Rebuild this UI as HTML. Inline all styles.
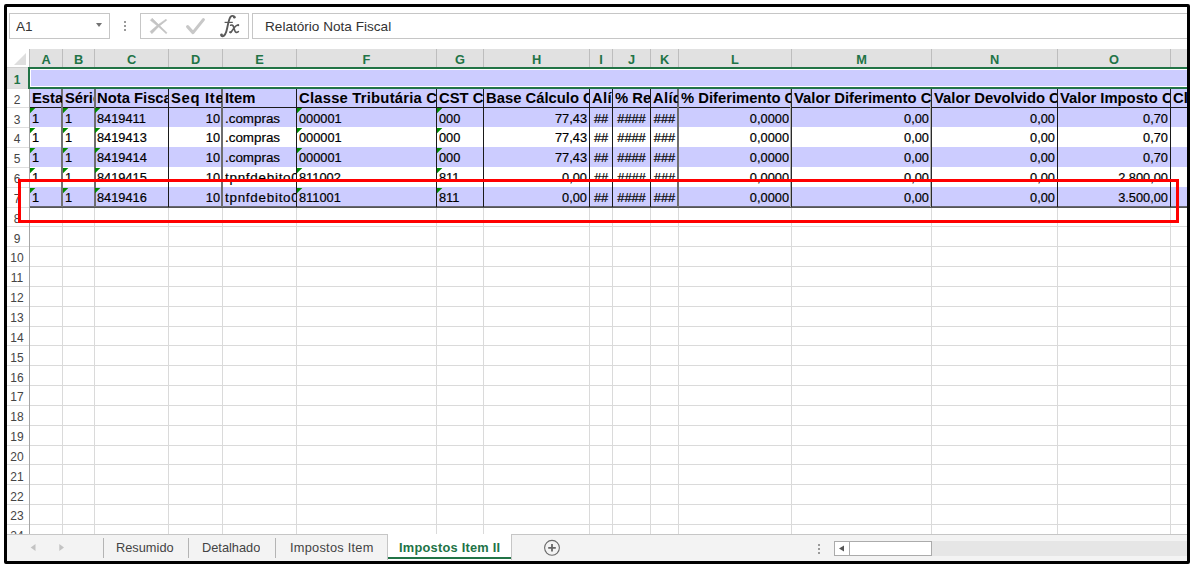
<!DOCTYPE html><html><head><meta charset="utf-8"><style>
*{margin:0;padding:0;box-sizing:border-box}
html,body{width:1193px;height:570px;overflow:hidden;background:#fff;font-family:"Liberation Sans",sans-serif}
.a{position:absolute}
.t{position:absolute;white-space:nowrap;overflow:hidden}
.d{-webkit-text-stroke:0.2px #000}
</style></head><body>
<div class="a" style="left:7px;top:7px;width:1180px;height:554px;overflow:hidden">
<div class="a" style="left:-7px;top:-7px;width:1193px;height:570px">

<div class="a" style="left:9px;top:13px;width:101px;height:26px;border:1px solid #c6c6c6;background:#fff"></div>
<div class="t" style="left:16px;top:19px;height:15px;line-height:15px;font-size:13.6px;font-weight:normal;color:#333;text-align:left;">A1</div>
<div class="a" style="left:96px;top:23px;width:0;height:0;border-left:3.5px solid transparent;border-right:3.5px solid transparent;border-top:4px solid #737373"></div>
<div class="a" style="left:124px;top:21px;width:2px;height:2px;background:#9a9a9a"></div>
<div class="a" style="left:124px;top:25px;width:2px;height:2px;background:#9a9a9a"></div>
<div class="a" style="left:124px;top:29px;width:2px;height:2px;background:#9a9a9a"></div>
<div class="a" style="left:140px;top:13px;width:109px;height:26px;border:1px solid #c6c6c6;background:#fff"></div>
<svg class="a" style="left:145px;top:14px" width="28" height="24" viewBox="145 14 28 24">
<path d="M150.36 20.34 Q158.5 26.5 166.2 33.64 L167.0 32.76 Q159.5 25.5 152.24 18.26 Z" fill="#c4c4c4" stroke="#c4c4c4" stroke-width="0.6" stroke-linejoin="round"/>
<path d="M166.015 19.24 Q157.5 24.5 150.1 31.53 L151.9 33.67 Q158.5 25.8 166.785 20.16 Z" fill="#c4c4c4" stroke="#c4c4c4" stroke-width="0.6" stroke-linejoin="round"/>
</svg>
<svg class="a" style="left:180px;top:14px" width="30" height="24" viewBox="180 14 30 24">
<path d="M187.6 26.6 L193 32.6 L203.4 19.6" stroke="#c8c8c8" stroke-width="3.1" fill="none" stroke-linecap="round" stroke-linejoin="round"/>
</svg>
<svg class="a" style="left:212px;top:12px" width="40" height="28" viewBox="212 12 40 28">
<path d="M234.6 17.2 C234 15.6 231.8 15.3 230.5 16.9 C229.1 18.7 228.2 23 227.2 28 C226.2 33 225.2 35.8 222.8 36.2 C221.8 36.3 221 35.8 221.3 34.9" stroke="#5a5a5a" stroke-width="1.9" fill="none" stroke-linecap="round"/>
<circle cx="234.3" cy="17.3" r="1.3" fill="#5a5a5a"/><circle cx="221.6" cy="34.7" r="1.3" fill="#5a5a5a"/>
<path d="M224.6 22.4 H232.8" stroke="#5a5a5a" stroke-width="1.2"/>
<path d="M230.6 25.2 C232.2 24.6 233.1 25.2 233.6 27 L234.9 31 C235.4 32.6 236.6 32.9 238.4 31.6 M238.4 25 C236.8 24.8 235.4 26 233.5 28.6 L231.4 31.8 C230.9 32.6 230.3 32.7 230 32.2" stroke="#5a5a5a" stroke-width="1.6" fill="none" stroke-linecap="round"/>
<circle cx="238.2" cy="25.3" r="1" fill="#5a5a5a"/><circle cx="230.3" cy="32.2" r="1" fill="#5a5a5a"/>
</svg>
<div class="a" style="left:252px;top:13px;width:1000px;height:26px;border:1px solid #c6c6c6;background:#fff"></div>
<div class="t" style="left:265px;top:19px;height:15px;line-height:15px;font-size:13.6px;font-weight:normal;color:#333;text-align:left;letter-spacing:0px;">Relatório Nota Fiscal</div>
<div class="a" style="left:29px;top:49px;width:1160px;height:18px;background:#e1e1e1"></div>
<svg class="a" style="left:7px;top:49px" width="22" height="18"><path d="M7 16 L19 4 L19 16 Z" fill="#dedede"/></svg>
<div class="a" style="left:7px;top:67px;width:22px;height:1px;background:#cfcfcf"></div>
<div class="a" style="left:29px;top:49px;width:1px;height:18px;background:#bdbdbd"></div>
<div class="t" style="left:25.5px;top:52px;width:41px;height:15px;line-height:15px;font-size:12.8px;font-weight:bold;color:#217346;text-align:center;">A</div>
<div class="a" style="left:62px;top:49px;width:1px;height:18px;background:#bdbdbd"></div>
<div class="t" style="left:58.0px;top:52px;width:41px;height:15px;line-height:15px;font-size:12.8px;font-weight:bold;color:#217346;text-align:center;">B</div>
<div class="a" style="left:94px;top:49px;width:1px;height:18px;background:#bdbdbd"></div>
<div class="t" style="left:111.0px;top:52px;width:41px;height:15px;line-height:15px;font-size:12.8px;font-weight:bold;color:#217346;text-align:center;">C</div>
<div class="a" style="left:168px;top:49px;width:1px;height:18px;background:#bdbdbd"></div>
<div class="t" style="left:175.0px;top:52px;width:41px;height:15px;line-height:15px;font-size:12.8px;font-weight:bold;color:#217346;text-align:center;">D</div>
<div class="a" style="left:222px;top:49px;width:1px;height:18px;background:#bdbdbd"></div>
<div class="t" style="left:239.0px;top:52px;width:41px;height:15px;line-height:15px;font-size:12.8px;font-weight:bold;color:#217346;text-align:center;">E</div>
<div class="a" style="left:296px;top:49px;width:1px;height:18px;background:#bdbdbd"></div>
<div class="t" style="left:346.0px;top:52px;width:41px;height:15px;line-height:15px;font-size:12.8px;font-weight:bold;color:#217346;text-align:center;">F</div>
<div class="a" style="left:436px;top:49px;width:1px;height:18px;background:#bdbdbd"></div>
<div class="t" style="left:439.5px;top:52px;width:41px;height:15px;line-height:15px;font-size:12.8px;font-weight:bold;color:#217346;text-align:center;">G</div>
<div class="a" style="left:483px;top:49px;width:1px;height:18px;background:#bdbdbd"></div>
<div class="t" style="left:516.0px;top:52px;width:41px;height:15px;line-height:15px;font-size:12.8px;font-weight:bold;color:#217346;text-align:center;">H</div>
<div class="a" style="left:589px;top:49px;width:1px;height:18px;background:#bdbdbd"></div>
<div class="t" style="left:580.5px;top:52px;width:41px;height:15px;line-height:15px;font-size:12.8px;font-weight:bold;color:#217346;text-align:center;">I</div>
<div class="a" style="left:612px;top:49px;width:1px;height:18px;background:#bdbdbd"></div>
<div class="t" style="left:611.0px;top:52px;width:41px;height:15px;line-height:15px;font-size:12.8px;font-weight:bold;color:#217346;text-align:center;">J</div>
<div class="a" style="left:650px;top:49px;width:1px;height:18px;background:#bdbdbd"></div>
<div class="t" style="left:644.0px;top:52px;width:41px;height:15px;line-height:15px;font-size:12.8px;font-weight:bold;color:#217346;text-align:center;">K</div>
<div class="a" style="left:678px;top:49px;width:1px;height:18px;background:#bdbdbd"></div>
<div class="t" style="left:714.5px;top:52px;width:41px;height:15px;line-height:15px;font-size:12.8px;font-weight:bold;color:#217346;text-align:center;">L</div>
<div class="a" style="left:791px;top:49px;width:1px;height:18px;background:#bdbdbd"></div>
<div class="t" style="left:841.0px;top:52px;width:41px;height:15px;line-height:15px;font-size:12.8px;font-weight:bold;color:#217346;text-align:center;">M</div>
<div class="a" style="left:931px;top:49px;width:1px;height:18px;background:#bdbdbd"></div>
<div class="t" style="left:974.0px;top:52px;width:41px;height:15px;line-height:15px;font-size:12.8px;font-weight:bold;color:#217346;text-align:center;">N</div>
<div class="a" style="left:1057px;top:49px;width:1px;height:18px;background:#bdbdbd"></div>
<div class="t" style="left:1093.5px;top:52px;width:41px;height:15px;line-height:15px;font-size:12.8px;font-weight:bold;color:#217346;text-align:center;">O</div>
<div class="a" style="left:1170px;top:49px;width:1px;height:18px;background:#bdbdbd"></div>
<div class="t" style="left:1215.0px;top:52px;width:41px;height:15px;line-height:15px;font-size:12.8px;font-weight:bold;color:#217346;text-align:center;">P</div>
<div class="a" style="left:7px;top:68px;width:22px;height:20px;background:#e1e1e1"></div>
<div class="a" style="left:7px;top:88px;width:22px;height:1px;background:#dedede"></div>
<div class="t" style="left:6px;top:73px;width:22px;height:14px;line-height:14px;font-size:12px;font-weight:bold;color:#217346;text-align:center;">1</div>
<div class="a" style="left:7px;top:107px;width:22px;height:1px;background:#dedede"></div>
<div class="t" style="left:6px;top:93px;width:22px;height:14px;line-height:14px;font-size:12px;font-weight:normal;color:#444;text-align:center;">2</div>
<div class="a" style="left:7px;top:127px;width:22px;height:1px;background:#dedede"></div>
<div class="t" style="left:6px;top:113px;width:22px;height:14px;line-height:14px;font-size:12px;font-weight:normal;color:#444;text-align:center;">3</div>
<div class="a" style="left:7px;top:147px;width:22px;height:1px;background:#dedede"></div>
<div class="t" style="left:6px;top:132px;width:22px;height:14px;line-height:14px;font-size:12px;font-weight:normal;color:#444;text-align:center;">4</div>
<div class="a" style="left:7px;top:167px;width:22px;height:1px;background:#dedede"></div>
<div class="t" style="left:6px;top:152px;width:22px;height:14px;line-height:14px;font-size:12px;font-weight:normal;color:#444;text-align:center;">5</div>
<div class="a" style="left:7px;top:187px;width:22px;height:1px;background:#dedede"></div>
<div class="t" style="left:6px;top:172px;width:22px;height:14px;line-height:14px;font-size:12px;font-weight:normal;color:#444;text-align:center;">6</div>
<div class="a" style="left:7px;top:207px;width:22px;height:1px;background:#dedede"></div>
<div class="t" style="left:6px;top:192px;width:22px;height:14px;line-height:14px;font-size:12px;font-weight:normal;color:#444;text-align:center;">7</div>
<div class="a" style="left:7px;top:226px;width:22px;height:1px;background:#dedede"></div>
<div class="t" style="left:6px;top:212px;width:22px;height:14px;line-height:14px;font-size:12px;font-weight:normal;color:#444;text-align:center;">8</div>
<div class="a" style="left:7px;top:246px;width:22px;height:1px;background:#dedede"></div>
<div class="t" style="left:6px;top:232px;width:22px;height:14px;line-height:14px;font-size:12px;font-weight:normal;color:#444;text-align:center;">9</div>
<div class="a" style="left:7px;top:266px;width:22px;height:1px;background:#dedede"></div>
<div class="t" style="left:6px;top:251px;width:22px;height:14px;line-height:14px;font-size:12px;font-weight:normal;color:#444;text-align:center;">10</div>
<div class="a" style="left:7px;top:286px;width:22px;height:1px;background:#dedede"></div>
<div class="t" style="left:6px;top:271px;width:22px;height:14px;line-height:14px;font-size:12px;font-weight:normal;color:#444;text-align:center;">11</div>
<div class="a" style="left:7px;top:306px;width:22px;height:1px;background:#dedede"></div>
<div class="t" style="left:6px;top:291px;width:22px;height:14px;line-height:14px;font-size:12px;font-weight:normal;color:#444;text-align:center;">12</div>
<div class="a" style="left:7px;top:326px;width:22px;height:1px;background:#dedede"></div>
<div class="t" style="left:6px;top:311px;width:22px;height:14px;line-height:14px;font-size:12px;font-weight:normal;color:#444;text-align:center;">13</div>
<div class="a" style="left:7px;top:345px;width:22px;height:1px;background:#dedede"></div>
<div class="t" style="left:6px;top:331px;width:22px;height:14px;line-height:14px;font-size:12px;font-weight:normal;color:#444;text-align:center;">14</div>
<div class="a" style="left:7px;top:365px;width:22px;height:1px;background:#dedede"></div>
<div class="t" style="left:6px;top:351px;width:22px;height:14px;line-height:14px;font-size:12px;font-weight:normal;color:#444;text-align:center;">15</div>
<div class="a" style="left:7px;top:385px;width:22px;height:1px;background:#dedede"></div>
<div class="t" style="left:6px;top:371px;width:22px;height:14px;line-height:14px;font-size:12px;font-weight:normal;color:#444;text-align:center;">16</div>
<div class="a" style="left:7px;top:405px;width:22px;height:1px;background:#dedede"></div>
<div class="t" style="left:6px;top:390px;width:22px;height:14px;line-height:14px;font-size:12px;font-weight:normal;color:#444;text-align:center;">17</div>
<div class="a" style="left:7px;top:425px;width:22px;height:1px;background:#dedede"></div>
<div class="t" style="left:6px;top:410px;width:22px;height:14px;line-height:14px;font-size:12px;font-weight:normal;color:#444;text-align:center;">18</div>
<div class="a" style="left:7px;top:445px;width:22px;height:1px;background:#dedede"></div>
<div class="t" style="left:6px;top:430px;width:22px;height:14px;line-height:14px;font-size:12px;font-weight:normal;color:#444;text-align:center;">19</div>
<div class="a" style="left:7px;top:464px;width:22px;height:1px;background:#dedede"></div>
<div class="t" style="left:6px;top:450px;width:22px;height:14px;line-height:14px;font-size:12px;font-weight:normal;color:#444;text-align:center;">20</div>
<div class="a" style="left:7px;top:484px;width:22px;height:1px;background:#dedede"></div>
<div class="t" style="left:6px;top:470px;width:22px;height:14px;line-height:14px;font-size:12px;font-weight:normal;color:#444;text-align:center;">21</div>
<div class="a" style="left:7px;top:504px;width:22px;height:1px;background:#dedede"></div>
<div class="t" style="left:6px;top:490px;width:22px;height:14px;line-height:14px;font-size:12px;font-weight:normal;color:#444;text-align:center;">22</div>
<div class="a" style="left:7px;top:524px;width:22px;height:1px;background:#dedede"></div>
<div class="t" style="left:6px;top:509px;width:22px;height:14px;line-height:14px;font-size:12px;font-weight:normal;color:#444;text-align:center;">23</div>
<div class="a" style="left:7px;top:544px;width:22px;height:1px;background:#dedede"></div>
<div class="t" style="left:6px;top:529px;width:22px;height:14px;line-height:14px;font-size:12px;font-weight:normal;color:#444;text-align:center;">24</div>
<div class="a" style="left:29px;top:67px;width:1px;height:470px;background:#a6a6a6"></div>
<div class="a" style="left:30px;top:207px;width:1160px;height:1px;background:#dadada"></div>
<div class="a" style="left:30px;top:226px;width:1160px;height:1px;background:#dadada"></div>
<div class="a" style="left:30px;top:246px;width:1160px;height:1px;background:#dadada"></div>
<div class="a" style="left:30px;top:266px;width:1160px;height:1px;background:#dadada"></div>
<div class="a" style="left:30px;top:286px;width:1160px;height:1px;background:#dadada"></div>
<div class="a" style="left:30px;top:306px;width:1160px;height:1px;background:#dadada"></div>
<div class="a" style="left:30px;top:326px;width:1160px;height:1px;background:#dadada"></div>
<div class="a" style="left:30px;top:345px;width:1160px;height:1px;background:#dadada"></div>
<div class="a" style="left:30px;top:365px;width:1160px;height:1px;background:#dadada"></div>
<div class="a" style="left:30px;top:385px;width:1160px;height:1px;background:#dadada"></div>
<div class="a" style="left:30px;top:405px;width:1160px;height:1px;background:#dadada"></div>
<div class="a" style="left:30px;top:425px;width:1160px;height:1px;background:#dadada"></div>
<div class="a" style="left:30px;top:445px;width:1160px;height:1px;background:#dadada"></div>
<div class="a" style="left:30px;top:464px;width:1160px;height:1px;background:#dadada"></div>
<div class="a" style="left:30px;top:484px;width:1160px;height:1px;background:#dadada"></div>
<div class="a" style="left:30px;top:504px;width:1160px;height:1px;background:#dadada"></div>
<div class="a" style="left:30px;top:524px;width:1160px;height:1px;background:#dadada"></div>
<div class="a" style="left:30px;top:544px;width:1160px;height:1px;background:#dadada"></div>
<div class="a" style="left:62px;top:207px;width:1px;height:340px;background:#dadada"></div>
<div class="a" style="left:94px;top:207px;width:1px;height:340px;background:#dadada"></div>
<div class="a" style="left:168px;top:207px;width:1px;height:340px;background:#dadada"></div>
<div class="a" style="left:222px;top:207px;width:1px;height:340px;background:#dadada"></div>
<div class="a" style="left:296px;top:207px;width:1px;height:340px;background:#dadada"></div>
<div class="a" style="left:436px;top:207px;width:1px;height:340px;background:#dadada"></div>
<div class="a" style="left:483px;top:207px;width:1px;height:340px;background:#dadada"></div>
<div class="a" style="left:589px;top:207px;width:1px;height:340px;background:#dadada"></div>
<div class="a" style="left:612px;top:207px;width:1px;height:340px;background:#dadada"></div>
<div class="a" style="left:650px;top:207px;width:1px;height:340px;background:#dadada"></div>
<div class="a" style="left:678px;top:207px;width:1px;height:340px;background:#dadada"></div>
<div class="a" style="left:791px;top:207px;width:1px;height:340px;background:#dadada"></div>
<div class="a" style="left:931px;top:207px;width:1px;height:340px;background:#dadada"></div>
<div class="a" style="left:1057px;top:207px;width:1px;height:340px;background:#dadada"></div>
<div class="a" style="left:1170px;top:207px;width:1px;height:340px;background:#dadada"></div>
<div class="a" style="left:28px;top:67px;width:1170px;height:22px;border:2px solid #217346;border-right:none;background:#fff"></div>
<div class="a" style="left:31px;top:70px;width:1160px;height:16px;background:#ccccff"></div>
<div class="a" style="left:30px;top:89px;width:1160px;height:18px;background:#ccccff"></div>
<div class="a" style="left:30px;top:107px;width:1160px;height:20px;background:#ccccff"></div>
<div class="a" style="left:30px;top:127px;width:1160px;height:20px;background:#fff"></div>
<div class="a" style="left:30px;top:147px;width:1160px;height:20px;background:#ccccff"></div>
<div class="a" style="left:30px;top:167px;width:1160px;height:20px;background:#fff"></div>
<div class="a" style="left:30px;top:187px;width:1160px;height:20px;background:#ccccff"></div>
<div class="a" style="left:30px;top:107px;width:1160px;height:1px;background:#1a1a1a"></div>
<div class="a" style="left:30px;top:206px;width:1160px;height:1px;background:#666670"></div>
<div class="a" style="left:30px;top:207px;width:1160px;height:1px;background:#555555"></div>
<div class="a" style="left:61px;top:89px;width:2px;height:118px;background:#727272"></div>
<div class="a" style="left:94px;top:89px;width:2px;height:118px;background:#6e6e6e"></div>
<div class="a" style="left:168px;top:89px;width:1px;height:118px;background:#1a1a1a"></div>
<div class="a" style="left:221px;top:89px;width:2px;height:118px;background:#6e6e6e"></div>
<div class="a" style="left:296px;top:89px;width:1px;height:118px;background:#1a1a1a"></div>
<div class="a" style="left:436px;top:89px;width:1px;height:118px;background:#1a1a1a"></div>
<div class="a" style="left:483px;top:89px;width:1px;height:118px;background:#1a1a1a"></div>
<div class="a" style="left:589px;top:89px;width:1px;height:118px;background:#1a1a1a"></div>
<div class="a" style="left:612px;top:89px;width:1px;height:118px;background:#1a1a1a"></div>
<div class="a" style="left:650px;top:89px;width:1px;height:118px;background:#1a1a1a"></div>
<div class="a" style="left:677px;top:89px;width:2px;height:118px;background:#6e6e6e"></div>
<div class="a" style="left:790px;top:89px;width:1px;height:118px;background:#b0b0b0"></div>
<div class="a" style="left:791px;top:89px;width:1px;height:118px;background:#2a2a2a"></div>
<div class="a" style="left:930px;top:89px;width:1px;height:118px;background:#b0b0b0"></div>
<div class="a" style="left:931px;top:89px;width:1px;height:118px;background:#2a2a2a"></div>
<div class="a" style="left:1057px;top:89px;width:1px;height:118px;background:#1a1a1a"></div>
<div class="a" style="left:1170px;top:89px;width:1px;height:118px;background:#1a1a1a"></div>
<div class="t" style="left:30px;top:89px;width:32px;height:18px">
<div class="t" style="left:2px;top:1px;line-height:17px;font-size:14.8px;font-weight:bold;color:#000;letter-spacing:0px">Estado</div></div>
<div class="t" style="left:63px;top:89px;width:31px;height:18px">
<div class="t" style="left:2px;top:1px;line-height:17px;font-size:14.8px;font-weight:bold;color:#000;letter-spacing:0px">Série</div></div>
<div class="t" style="left:95px;top:89px;width:73px;height:18px">
<div class="t" style="left:2px;top:1px;line-height:17px;font-size:14.8px;font-weight:bold;color:#000;letter-spacing:0px">Nota Fiscal</div></div>
<div class="t" style="left:169px;top:89px;width:53px;height:18px">
<div class="t" style="left:2px;top:1px;line-height:17px;font-size:14.8px;font-weight:bold;color:#000;letter-spacing:0.7px">Seq Item</div></div>
<div class="t" style="left:223px;top:89px;width:73px;height:18px">
<div class="t" style="left:2px;top:1px;line-height:17px;font-size:14.8px;font-weight:bold;color:#000;letter-spacing:0px">Item</div></div>
<div class="t" style="left:297px;top:89px;width:139px;height:18px">
<div class="t" style="left:2px;top:1px;line-height:17px;font-size:14.8px;font-weight:bold;color:#000;letter-spacing:0.22px">Classe Tributária COFINS</div></div>
<div class="t" style="left:437px;top:89px;width:46px;height:18px">
<div class="t" style="left:2px;top:1px;line-height:17px;font-size:14.8px;font-weight:bold;color:#000;letter-spacing:0px">CST COFINS</div></div>
<div class="t" style="left:484px;top:89px;width:105px;height:18px">
<div class="t" style="left:2px;top:1px;line-height:17px;font-size:14.8px;font-weight:bold;color:#000;letter-spacing:0px">Base Cálculo COFINS</div></div>
<div class="t" style="left:590px;top:89px;width:22px;height:18px">
<div class="t" style="left:2px;top:1px;line-height:17px;font-size:14.8px;font-weight:bold;color:#000;letter-spacing:0.3px">Alíquota</div></div>
<div class="t" style="left:613px;top:89px;width:37px;height:18px">
<div class="t" style="left:2px;top:1px;line-height:17px;font-size:14.8px;font-weight:bold;color:#000;letter-spacing:0px">% Redução</div></div>
<div class="t" style="left:651px;top:89px;width:27px;height:18px">
<div class="t" style="left:2px;top:1px;line-height:17px;font-size:14.8px;font-weight:bold;color:#000;letter-spacing:0.3px">Alíquota</div></div>
<div class="t" style="left:679px;top:89px;width:112px;height:18px">
<div class="t" style="left:2px;top:1px;line-height:17px;font-size:14.8px;font-weight:bold;color:#000;letter-spacing:0px">% Diferimento COFINS</div></div>
<div class="t" style="left:792px;top:89px;width:139px;height:18px">
<div class="t" style="left:2px;top:1px;line-height:17px;font-size:14.8px;font-weight:bold;color:#000;letter-spacing:0px">Valor Diferimento COFINS</div></div>
<div class="t" style="left:932px;top:89px;width:125px;height:18px">
<div class="t" style="left:2px;top:1px;line-height:17px;font-size:14.8px;font-weight:bold;color:#000;letter-spacing:0px">Valor Devolvido COFINS</div></div>
<div class="t" style="left:1058px;top:89px;width:112px;height:18px">
<div class="t" style="left:2px;top:1px;line-height:17px;font-size:14.8px;font-weight:bold;color:#000;letter-spacing:0px">Valor Imposto COFINS</div></div>
<div class="t" style="left:1171px;top:89px;width:129px;height:18px">
<div class="t" style="left:2px;top:1px;line-height:17px;font-size:14.8px;font-weight:bold;color:#000;letter-spacing:0px">Classe</div></div>
<svg class="a" style="left:30px;top:108px" width="6" height="6"><path d="M0 0 H5.3 L0 5.3 Z" fill="#008a00"/></svg>
<div class="t d" style="left:32px;top:111px;width:30px;height:15px;line-height:15px;font-size:12.8px;font-weight:normal;color:#000;text-align:left;">1</div>
<svg class="a" style="left:63px;top:108px" width="6" height="6"><path d="M0 0 H5.3 L0 5.3 Z" fill="#008a00"/></svg>
<div class="t d" style="left:65px;top:111px;width:29px;height:15px;line-height:15px;font-size:12.8px;font-weight:normal;color:#000;text-align:left;">1</div>
<svg class="a" style="left:95px;top:108px" width="6" height="6"><path d="M0 0 H5.3 L0 5.3 Z" fill="#008a00"/></svg>
<div class="t d" style="left:97px;top:111px;width:71px;height:15px;line-height:15px;font-size:12.8px;font-weight:normal;color:#000;text-align:left;">8419411</div>
<div class="t d" style="left:169px;top:111px;width:51px;height:15px;line-height:15px;font-size:12.8px;font-weight:normal;color:#000;text-align:right;">10</div>
<div class="t d" style="left:225px;top:111px;width:71px;height:15px;line-height:15px;font-size:13.4px;font-weight:normal;color:#000;text-align:left;">.compras</div>
<svg class="a" style="left:297px;top:108px" width="6" height="6"><path d="M0 0 H5.3 L0 5.3 Z" fill="#008a00"/></svg>
<div class="t d" style="left:299px;top:111px;width:137px;height:15px;line-height:15px;font-size:12.8px;font-weight:normal;color:#000;text-align:left;">000001</div>
<svg class="a" style="left:437px;top:108px" width="6" height="6"><path d="M0 0 H5.3 L0 5.3 Z" fill="#008a00"/></svg>
<div class="t d" style="left:439px;top:111px;width:44px;height:15px;line-height:15px;font-size:12.8px;font-weight:normal;color:#000;text-align:left;">000</div>
<div class="t d" style="left:484px;top:111px;width:103px;height:15px;line-height:15px;font-size:12.8px;font-weight:normal;color:#000;text-align:right;">77,43</div>
<div class="t d" style="left:590px;top:111px;width:22px;height:15px;line-height:15px;font-size:12.8px;font-weight:normal;color:#000;text-align:center;">##</div>
<div class="t d" style="left:613px;top:111px;width:37px;height:15px;line-height:15px;font-size:12.8px;font-weight:normal;color:#000;text-align:center;">####</div>
<div class="t d" style="left:651px;top:111px;width:27px;height:15px;line-height:15px;font-size:12.8px;font-weight:normal;color:#000;text-align:center;">###</div>
<div class="t d" style="left:679px;top:111px;width:110px;height:15px;line-height:15px;font-size:12.8px;font-weight:normal;color:#000;text-align:right;">0,0000</div>
<div class="t d" style="left:792px;top:111px;width:137px;height:15px;line-height:15px;font-size:12.8px;font-weight:normal;color:#000;text-align:right;">0,00</div>
<div class="t d" style="left:932px;top:111px;width:123px;height:15px;line-height:15px;font-size:12.8px;font-weight:normal;color:#000;text-align:right;">0,00</div>
<div class="t d" style="left:1058px;top:111px;width:110px;height:15px;line-height:15px;font-size:12.8px;font-weight:normal;color:#000;text-align:right;">0,70</div>
<svg class="a" style="left:30px;top:128px" width="6" height="6"><path d="M0 0 H5.3 L0 5.3 Z" fill="#008a00"/></svg>
<div class="t d" style="left:32px;top:130px;width:30px;height:15px;line-height:15px;font-size:12.8px;font-weight:normal;color:#000;text-align:left;">1</div>
<svg class="a" style="left:63px;top:128px" width="6" height="6"><path d="M0 0 H5.3 L0 5.3 Z" fill="#008a00"/></svg>
<div class="t d" style="left:65px;top:130px;width:29px;height:15px;line-height:15px;font-size:12.8px;font-weight:normal;color:#000;text-align:left;">1</div>
<svg class="a" style="left:95px;top:128px" width="6" height="6"><path d="M0 0 H5.3 L0 5.3 Z" fill="#008a00"/></svg>
<div class="t d" style="left:97px;top:130px;width:71px;height:15px;line-height:15px;font-size:12.8px;font-weight:normal;color:#000;text-align:left;">8419413</div>
<div class="t d" style="left:169px;top:130px;width:51px;height:15px;line-height:15px;font-size:12.8px;font-weight:normal;color:#000;text-align:right;">10</div>
<div class="t d" style="left:225px;top:130px;width:71px;height:15px;line-height:15px;font-size:13.4px;font-weight:normal;color:#000;text-align:left;">.compras</div>
<svg class="a" style="left:297px;top:128px" width="6" height="6"><path d="M0 0 H5.3 L0 5.3 Z" fill="#008a00"/></svg>
<div class="t d" style="left:299px;top:130px;width:137px;height:15px;line-height:15px;font-size:12.8px;font-weight:normal;color:#000;text-align:left;">000001</div>
<svg class="a" style="left:437px;top:128px" width="6" height="6"><path d="M0 0 H5.3 L0 5.3 Z" fill="#008a00"/></svg>
<div class="t d" style="left:439px;top:130px;width:44px;height:15px;line-height:15px;font-size:12.8px;font-weight:normal;color:#000;text-align:left;">000</div>
<div class="t d" style="left:484px;top:130px;width:103px;height:15px;line-height:15px;font-size:12.8px;font-weight:normal;color:#000;text-align:right;">77,43</div>
<div class="t d" style="left:590px;top:130px;width:22px;height:15px;line-height:15px;font-size:12.8px;font-weight:normal;color:#000;text-align:center;">##</div>
<div class="t d" style="left:613px;top:130px;width:37px;height:15px;line-height:15px;font-size:12.8px;font-weight:normal;color:#000;text-align:center;">####</div>
<div class="t d" style="left:651px;top:130px;width:27px;height:15px;line-height:15px;font-size:12.8px;font-weight:normal;color:#000;text-align:center;">###</div>
<div class="t d" style="left:679px;top:130px;width:110px;height:15px;line-height:15px;font-size:12.8px;font-weight:normal;color:#000;text-align:right;">0,0000</div>
<div class="t d" style="left:792px;top:130px;width:137px;height:15px;line-height:15px;font-size:12.8px;font-weight:normal;color:#000;text-align:right;">0,00</div>
<div class="t d" style="left:932px;top:130px;width:123px;height:15px;line-height:15px;font-size:12.8px;font-weight:normal;color:#000;text-align:right;">0,00</div>
<div class="t d" style="left:1058px;top:130px;width:110px;height:15px;line-height:15px;font-size:12.8px;font-weight:normal;color:#000;text-align:right;">0,70</div>
<svg class="a" style="left:30px;top:148px" width="6" height="6"><path d="M0 0 H5.3 L0 5.3 Z" fill="#008a00"/></svg>
<div class="t d" style="left:32px;top:150px;width:30px;height:15px;line-height:15px;font-size:12.8px;font-weight:normal;color:#000;text-align:left;">1</div>
<svg class="a" style="left:63px;top:148px" width="6" height="6"><path d="M0 0 H5.3 L0 5.3 Z" fill="#008a00"/></svg>
<div class="t d" style="left:65px;top:150px;width:29px;height:15px;line-height:15px;font-size:12.8px;font-weight:normal;color:#000;text-align:left;">1</div>
<svg class="a" style="left:95px;top:148px" width="6" height="6"><path d="M0 0 H5.3 L0 5.3 Z" fill="#008a00"/></svg>
<div class="t d" style="left:97px;top:150px;width:71px;height:15px;line-height:15px;font-size:12.8px;font-weight:normal;color:#000;text-align:left;">8419414</div>
<div class="t d" style="left:169px;top:150px;width:51px;height:15px;line-height:15px;font-size:12.8px;font-weight:normal;color:#000;text-align:right;">10</div>
<div class="t d" style="left:225px;top:150px;width:71px;height:15px;line-height:15px;font-size:13.4px;font-weight:normal;color:#000;text-align:left;">.compras</div>
<svg class="a" style="left:297px;top:148px" width="6" height="6"><path d="M0 0 H5.3 L0 5.3 Z" fill="#008a00"/></svg>
<div class="t d" style="left:299px;top:150px;width:137px;height:15px;line-height:15px;font-size:12.8px;font-weight:normal;color:#000;text-align:left;">000001</div>
<svg class="a" style="left:437px;top:148px" width="6" height="6"><path d="M0 0 H5.3 L0 5.3 Z" fill="#008a00"/></svg>
<div class="t d" style="left:439px;top:150px;width:44px;height:15px;line-height:15px;font-size:12.8px;font-weight:normal;color:#000;text-align:left;">000</div>
<div class="t d" style="left:484px;top:150px;width:103px;height:15px;line-height:15px;font-size:12.8px;font-weight:normal;color:#000;text-align:right;">77,43</div>
<div class="t d" style="left:590px;top:150px;width:22px;height:15px;line-height:15px;font-size:12.8px;font-weight:normal;color:#000;text-align:center;">##</div>
<div class="t d" style="left:613px;top:150px;width:37px;height:15px;line-height:15px;font-size:12.8px;font-weight:normal;color:#000;text-align:center;">####</div>
<div class="t d" style="left:651px;top:150px;width:27px;height:15px;line-height:15px;font-size:12.8px;font-weight:normal;color:#000;text-align:center;">###</div>
<div class="t d" style="left:679px;top:150px;width:110px;height:15px;line-height:15px;font-size:12.8px;font-weight:normal;color:#000;text-align:right;">0,0000</div>
<div class="t d" style="left:792px;top:150px;width:137px;height:15px;line-height:15px;font-size:12.8px;font-weight:normal;color:#000;text-align:right;">0,00</div>
<div class="t d" style="left:932px;top:150px;width:123px;height:15px;line-height:15px;font-size:12.8px;font-weight:normal;color:#000;text-align:right;">0,00</div>
<div class="t d" style="left:1058px;top:150px;width:110px;height:15px;line-height:15px;font-size:12.8px;font-weight:normal;color:#000;text-align:right;">0,70</div>
<svg class="a" style="left:30px;top:168px" width="6" height="6"><path d="M0 0 H5.3 L0 5.3 Z" fill="#008a00"/></svg>
<div class="t d" style="left:32px;top:170px;width:30px;height:15px;line-height:15px;font-size:12.8px;font-weight:normal;color:#000;text-align:left;">1</div>
<svg class="a" style="left:63px;top:168px" width="6" height="6"><path d="M0 0 H5.3 L0 5.3 Z" fill="#008a00"/></svg>
<div class="t d" style="left:65px;top:170px;width:29px;height:15px;line-height:15px;font-size:12.8px;font-weight:normal;color:#000;text-align:left;">1</div>
<svg class="a" style="left:95px;top:168px" width="6" height="6"><path d="M0 0 H5.3 L0 5.3 Z" fill="#008a00"/></svg>
<div class="t d" style="left:97px;top:170px;width:71px;height:15px;line-height:15px;font-size:12.8px;font-weight:normal;color:#000;text-align:left;">8419415</div>
<div class="t d" style="left:169px;top:170px;width:51px;height:15px;line-height:15px;font-size:12.8px;font-weight:normal;color:#000;text-align:right;">10</div>
<div class="t d" style="left:225px;top:170px;width:71px;height:15px;line-height:15px;font-size:13.4px;font-weight:normal;color:#000;text-align:left;letter-spacing:0.75px;">tpnfdebito0001</div>
<svg class="a" style="left:297px;top:168px" width="6" height="6"><path d="M0 0 H5.3 L0 5.3 Z" fill="#008a00"/></svg>
<div class="t d" style="left:299px;top:170px;width:137px;height:15px;line-height:15px;font-size:12.8px;font-weight:normal;color:#000;text-align:left;">811002</div>
<svg class="a" style="left:437px;top:168px" width="6" height="6"><path d="M0 0 H5.3 L0 5.3 Z" fill="#008a00"/></svg>
<div class="t d" style="left:439px;top:170px;width:44px;height:15px;line-height:15px;font-size:12.8px;font-weight:normal;color:#000;text-align:left;">811</div>
<div class="t d" style="left:484px;top:170px;width:103px;height:15px;line-height:15px;font-size:12.8px;font-weight:normal;color:#000;text-align:right;">0,00</div>
<div class="t d" style="left:590px;top:170px;width:22px;height:15px;line-height:15px;font-size:12.8px;font-weight:normal;color:#000;text-align:center;">##</div>
<div class="t d" style="left:613px;top:170px;width:37px;height:15px;line-height:15px;font-size:12.8px;font-weight:normal;color:#000;text-align:center;">####</div>
<div class="t d" style="left:651px;top:170px;width:27px;height:15px;line-height:15px;font-size:12.8px;font-weight:normal;color:#000;text-align:center;">###</div>
<div class="t d" style="left:679px;top:170px;width:110px;height:15px;line-height:15px;font-size:12.8px;font-weight:normal;color:#000;text-align:right;">0,0000</div>
<div class="t d" style="left:792px;top:170px;width:137px;height:15px;line-height:15px;font-size:12.8px;font-weight:normal;color:#000;text-align:right;">0,00</div>
<div class="t d" style="left:932px;top:170px;width:123px;height:15px;line-height:15px;font-size:12.8px;font-weight:normal;color:#000;text-align:right;">0,00</div>
<div class="t d" style="left:1058px;top:170px;width:110px;height:15px;line-height:15px;font-size:12.8px;font-weight:normal;color:#000;text-align:right;">2.800,00</div>
<svg class="a" style="left:30px;top:188px" width="6" height="6"><path d="M0 0 H5.3 L0 5.3 Z" fill="#008a00"/></svg>
<div class="t d" style="left:32px;top:190px;width:30px;height:15px;line-height:15px;font-size:12.8px;font-weight:normal;color:#000;text-align:left;">1</div>
<svg class="a" style="left:63px;top:188px" width="6" height="6"><path d="M0 0 H5.3 L0 5.3 Z" fill="#008a00"/></svg>
<div class="t d" style="left:65px;top:190px;width:29px;height:15px;line-height:15px;font-size:12.8px;font-weight:normal;color:#000;text-align:left;">1</div>
<svg class="a" style="left:95px;top:188px" width="6" height="6"><path d="M0 0 H5.3 L0 5.3 Z" fill="#008a00"/></svg>
<div class="t d" style="left:97px;top:190px;width:71px;height:15px;line-height:15px;font-size:12.8px;font-weight:normal;color:#000;text-align:left;">8419416</div>
<div class="t d" style="left:169px;top:190px;width:51px;height:15px;line-height:15px;font-size:12.8px;font-weight:normal;color:#000;text-align:right;">10</div>
<div class="t d" style="left:225px;top:190px;width:71px;height:15px;line-height:15px;font-size:13.4px;font-weight:normal;color:#000;text-align:left;letter-spacing:0.75px;">tpnfdebito0001</div>
<svg class="a" style="left:297px;top:188px" width="6" height="6"><path d="M0 0 H5.3 L0 5.3 Z" fill="#008a00"/></svg>
<div class="t d" style="left:299px;top:190px;width:137px;height:15px;line-height:15px;font-size:12.8px;font-weight:normal;color:#000;text-align:left;">811001</div>
<svg class="a" style="left:437px;top:188px" width="6" height="6"><path d="M0 0 H5.3 L0 5.3 Z" fill="#008a00"/></svg>
<div class="t d" style="left:439px;top:190px;width:44px;height:15px;line-height:15px;font-size:12.8px;font-weight:normal;color:#000;text-align:left;">811</div>
<div class="t d" style="left:484px;top:190px;width:103px;height:15px;line-height:15px;font-size:12.8px;font-weight:normal;color:#000;text-align:right;">0,00</div>
<div class="t d" style="left:590px;top:190px;width:22px;height:15px;line-height:15px;font-size:12.8px;font-weight:normal;color:#000;text-align:center;">##</div>
<div class="t d" style="left:613px;top:190px;width:37px;height:15px;line-height:15px;font-size:12.8px;font-weight:normal;color:#000;text-align:center;">####</div>
<div class="t d" style="left:651px;top:190px;width:27px;height:15px;line-height:15px;font-size:12.8px;font-weight:normal;color:#000;text-align:center;">###</div>
<div class="t d" style="left:679px;top:190px;width:110px;height:15px;line-height:15px;font-size:12.8px;font-weight:normal;color:#000;text-align:right;">0,0000</div>
<div class="t d" style="left:792px;top:190px;width:137px;height:15px;line-height:15px;font-size:12.8px;font-weight:normal;color:#000;text-align:right;">0,00</div>
<div class="t d" style="left:932px;top:190px;width:123px;height:15px;line-height:15px;font-size:12.8px;font-weight:normal;color:#000;text-align:right;">0,00</div>
<div class="t d" style="left:1058px;top:190px;width:110px;height:15px;line-height:15px;font-size:12.8px;font-weight:normal;color:#000;text-align:right;">3.500,00</div>
<div class="a" style="left:7px;top:534px;width:1185px;height:1px;background:#c6c6c6"></div>
<div class="a" style="left:7px;top:535px;width:1185px;height:26px;background:#f3f3f3"></div>
<svg class="a" style="left:28px;top:542px" width="40" height="12"><path d="M7.5 2 L2.7 5.5 L7.5 9 Z" fill="#c3c3c3"/><path d="M31.3 2 L36 5.5 L31.3 9 Z" fill="#c3c3c3"/></svg>
<div class="a" style="left:103px;top:538px;width:1px;height:20px;background:#b4b4b4"></div>
<div class="a" style="left:188px;top:538px;width:1px;height:20px;background:#b4b4b4"></div>
<div class="a" style="left:275px;top:538px;width:1px;height:20px;background:#b4b4b4"></div>
<div class="t" style="left:116px;top:540px;height:15px;line-height:15px;font-size:12.8px;font-weight:normal;color:#444;text-align:left;">Resumido</div>
<div class="t" style="left:202px;top:540px;height:15px;line-height:15px;font-size:12.8px;font-weight:normal;color:#444;text-align:left;">Detalhado</div>
<div class="t" style="left:290px;top:540px;height:15px;line-height:15px;font-size:12.8px;font-weight:normal;color:#444;text-align:left;letter-spacing:0.25px;">Impostos Item</div>
<div class="a" style="left:387px;top:534px;width:125px;height:26px;background:#fff;border-left:1px solid #c6c6c6;border-right:1px solid #c6c6c6"></div>
<div class="a" style="left:388px;top:557px;width:123px;height:2px;background:#217346"></div>
<div class="t" style="left:399px;top:540px;height:15px;line-height:15px;font-size:12.8px;font-weight:bold;color:#217346;text-align:left;letter-spacing:0.25px;">Impostos Item II</div>
<svg class="a" style="left:543px;top:539px" width="18" height="18"><circle cx="9" cy="8.8" r="7.4" fill="none" stroke="#6a6a6a" stroke-width="1.1"/><path d="M9 5 V12.6 M5.2 8.8 H12.8" stroke="#666" stroke-width="1.8"/></svg>
<div class="a" style="left:818px;top:544px;width:2px;height:2px;background:#9a9a9a"></div>
<div class="a" style="left:818px;top:548px;width:2px;height:2px;background:#9a9a9a"></div>
<div class="a" style="left:818px;top:552px;width:2px;height:2px;background:#9a9a9a"></div>
<div class="a" style="left:932px;top:541px;width:260px;height:15px;background:#e6e6e6"></div>
<div class="a" style="left:834px;top:541px;width:16px;height:15px;border:1px solid #ababab;background:#fff"></div>
<svg class="a" style="left:834px;top:541px" width="16" height="15"><path d="M10 4.5 L5 7.5 L10 10.5 Z" fill="#555"/></svg>
<div class="a" style="left:849px;top:541px;width:83px;height:15px;border:1px solid #ababab;background:#fff"></div>
</div></div>
<div class="a" style="left:18px;top:179px;width:1161px;height:44px;border:3px solid #ff0000"></div>
<div class="a" style="left:4px;top:4px;width:1186px;height:560px;border:3px solid #000;border-radius:2px"></div>
</body></html>
